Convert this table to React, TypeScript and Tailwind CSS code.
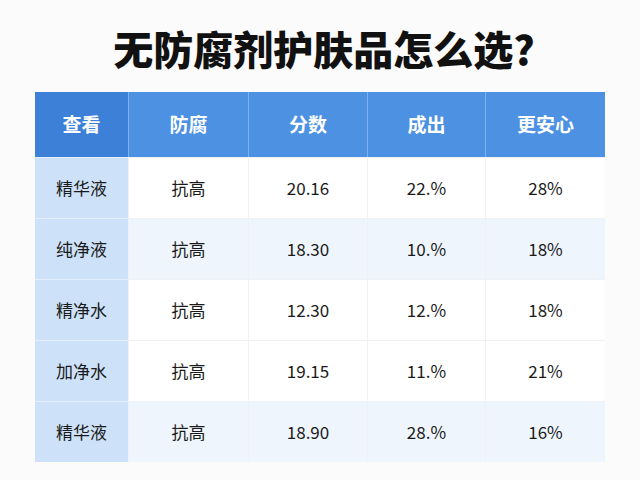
const headers = ['查看', '防腐', '分数', '成出', '更安心'];

const rows = [
  { name: '精华液', kind: '抗高', score: '20.16', out: '22.%', safe: '28%', tint: false },
  { name: '纯净液', kind: '抗高', score: '18.30', out: '10.%', safe: '18%', tint: true },
  { name: '精净水', kind: '抗高', score: '12.30', out: '12.%', safe: '18%', tint: false },
  { name: '加净水', kind: '抗高', score: '19.15', out: '11.%', safe: '21%', tint: false },
  { name: '精华液', kind: '抗高', score: '18.90', out: '28.%', safe: '16%', tint: true },
];

const font = "font-['Noto_Sans_CJK_SC',sans-serif]";

export default function App() {
  return (
    <div className={`w-[640px] h-[480px] bg-[#fbfbfb] ${font} flex flex-col items-center`}>
      <h1 className="h-[92px] pt-[19px] text-[40px] leading-[58px] font-black text-[#111] pl-[8px]">
        无防腐剂护肤品怎么选?
      </h1>

      <div className="w-[570px] grid grid-cols-[93px_120px_119px_118px_120px]">
        {headers.map((h, i) => (
          <div
            key={h}
            className={`h-[65px] flex items-center justify-center text-white text-[19px] font-bold ${
              i === 0 ? 'bg-[#3c80d8]' : 'bg-[#4d91e3] border-l border-[#7fb0ec]'
            }`}
          >
            {h}
          </div>
        ))}

        {rows.map((r, ri) => {
          const cell = `h-[61px] flex items-center justify-center text-[17px] text-[#1a1a1a] border-t border-[#eef1f5] ${
            r.tint ? 'bg-[#eef5fd]' : 'bg-white'
          }`;
          return [
            <div
              key={`n${ri}`}
              className="h-[61px] flex items-center justify-center text-[17px] text-[#1a1a1a] bg-[#cde2f8] border-t border-[#e4eefa]"
            >
              {r.name}
            </div>,
            <div key={`k${ri}`} className={`${cell} border-l border-l-[#eef1f5]`}>
              {r.kind}
            </div>,
            <div key={`s${ri}`} className={`${cell} border-l border-l-[#eef1f5]`}>
              {r.score}
            </div>,
            <div key={`o${ri}`} className={`${cell} border-l border-l-[#eef1f5]`}>
              {r.out}
            </div>,
            <div key={`f${ri}`} className={`${cell} border-l border-l-[#eef1f5]`}>
              {r.safe}
            </div>,
          ];
        })}
      </div>
    </div>
  );
}
